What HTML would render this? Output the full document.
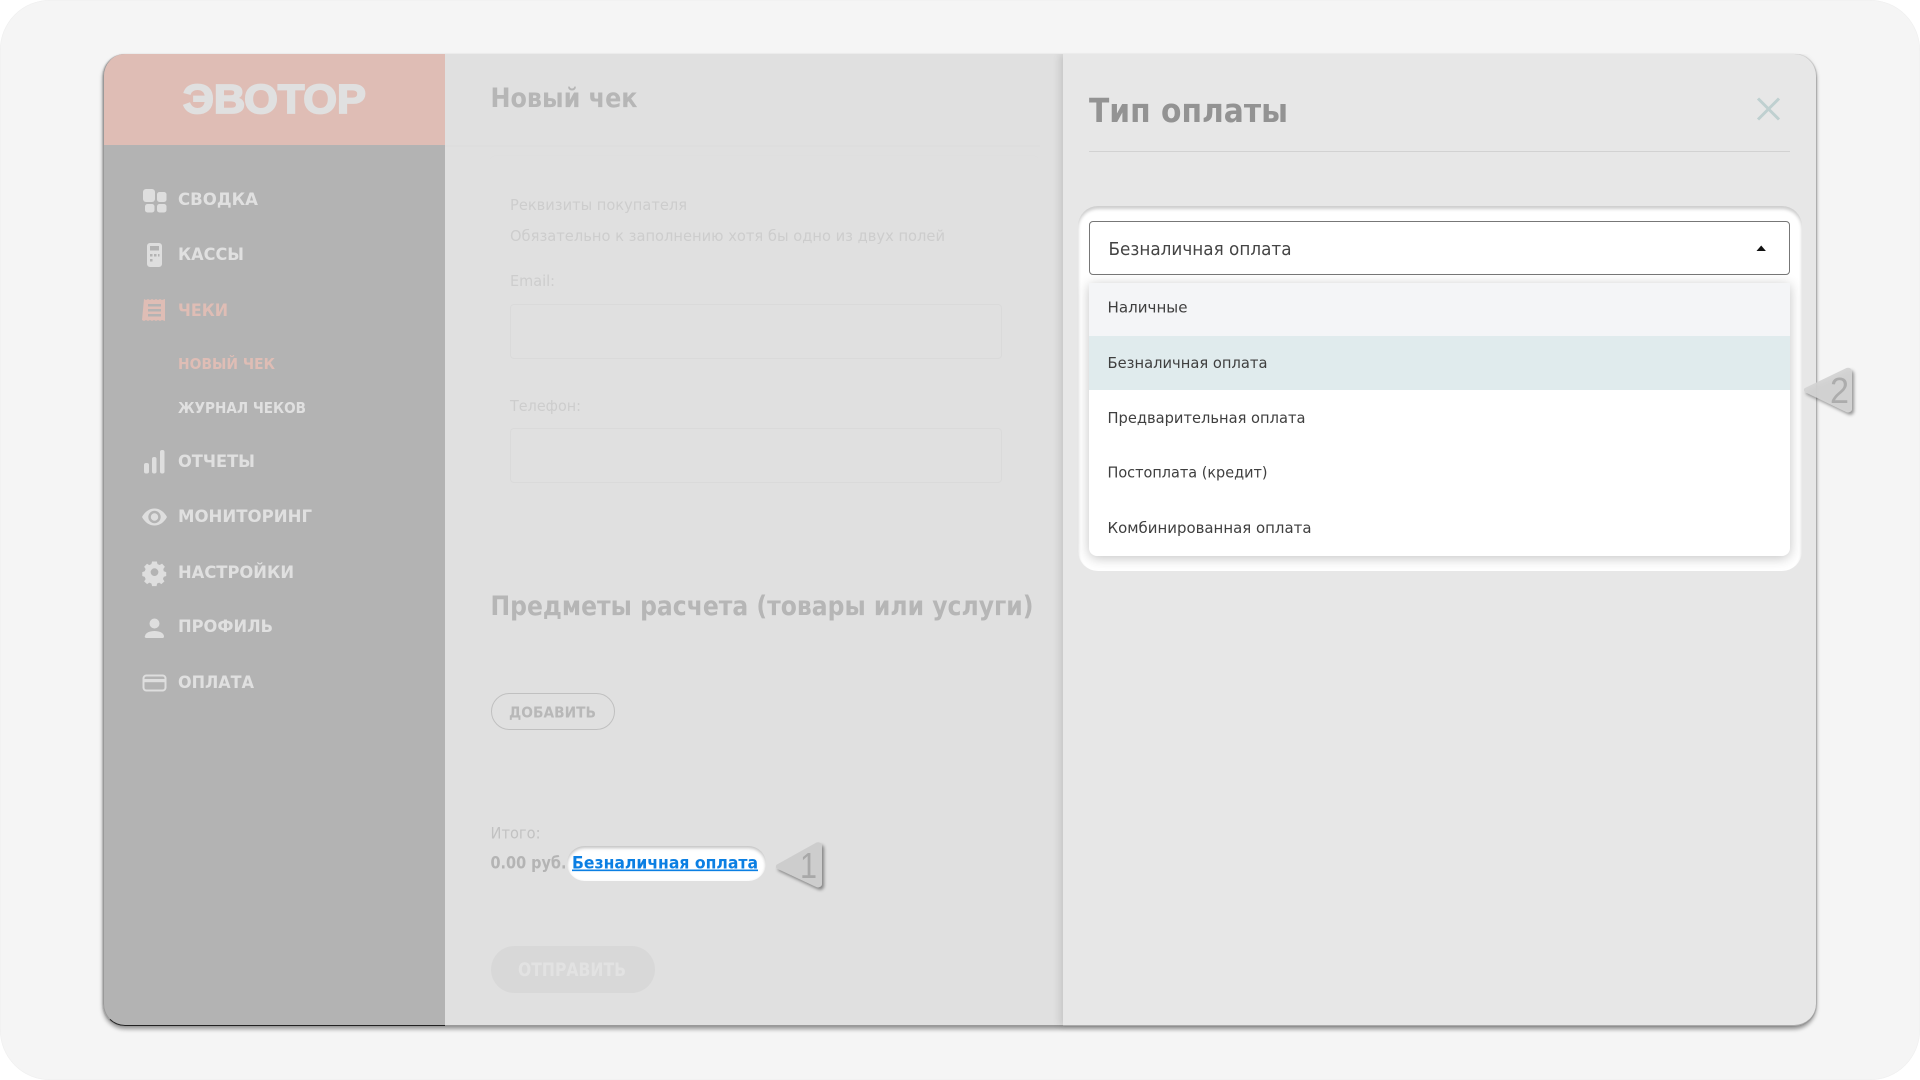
<!DOCTYPE html>
<html lang="ru"><head><meta charset="utf-8"><title>Тип оплаты</title>
<style>
html,body{margin:0;padding:0;width:1920px;height:1080px;overflow:hidden;background:#fff}
div{position:absolute;box-sizing:border-box}
#page{left:0;top:0;width:1920px;height:1080px;background:#f5f5f5;border-radius:50px;box-shadow:inset 0 0 1px rgba(0,0,0,.1)}
#app{left:103px;top:54px;width:1713px;height:972px;border-radius:22px;box-shadow:0 3px 4px rgba(0,0,0,.4),-1px 0 1px rgba(0,0,0,.12);background:#e0e0e0}
#side{left:103px;top:54px;width:342px;height:972px;background:#b3b3b3;border-radius:22px 0 0 22px;overflow:hidden;border-bottom:1px solid #222;border-left:1px solid #999}
#head{left:-1px;top:0;width:342px;height:91px;background:#dfbdb5}
#main{left:445px;top:54px;width:618px;height:972px;background:#e0e0e0;border-bottom:1px solid #999}
#hline{left:445px;top:145px;width:595px;height:2px;background:#dedede}
#card{left:490px;top:155px;width:549px;height:360px;background:#e0e0e0;border-top:1px solid #dfdfdf;border-radius:6px}
.inp{left:510px;width:492px;height:55px;border:1px solid #dadada;border-radius:4px;background:#e0e0e0}
#add{left:491px;top:693px;width:124px;height:37px;border:1px solid #c0c0c0;border-radius:19px}
#pill{left:567px;top:846px;width:199px;height:35px;border-radius:18px;background:#fff;box-shadow:inset 0 2px 3px rgba(0,0,0,.25)}
#send{left:491px;top:946px;width:164px;height:47px;border-radius:24px;background:#d8d8d8}
#panel{left:1063px;top:54px;width:753px;height:972px;background:#e7e7e7;border-radius:0 22px 22px 0;box-shadow:-3px 0 8px rgba(0,0,0,.12),1px 0 1px rgba(0,0,0,.15);border-bottom:1px solid #aaa;clip-path:inset(0 -12px -8px -12px)}
#pline{left:1089px;top:151px;width:701px;height:1px;background:#d2d2d2}
#hl{left:1078px;top:206px;width:724px;height:365px;border-radius:20px;background:#fff;box-shadow:inset 0 3px 3px rgba(0,0,0,.2)}
#sel{left:1089px;top:221px;width:701px;height:54px;border:1px solid #777;border-radius:4px;background:#fff}
#drop{left:1089px;top:283px;width:701px;height:273px;background:#fff;border-radius:0 0 8px 8px;box-shadow:0 2px 12px rgba(0,0,0,.24);overflow:hidden}
#i1{left:0;top:0;width:701px;height:53px;background:#f4f5f7}
#i2{left:0;top:53px;width:701px;height:54px;background:#e0ebed}
svg{position:absolute;left:0;top:0}
text{font-family:"Liberation Sans","DejaVu Sans",sans-serif}
.n{font-family:"DejaVu Sans","Liberation Sans",sans-serif;font-size:16.500px;font-weight:700;fill:#e0e0e0}
.a{fill:#dfbdb5}
.b{font-family:"DejaVu Sans","Liberation Sans",sans-serif;font-weight:700}
.r{font-family:"DejaVu Sans","Liberation Sans",sans-serif}
.f{font-size:15.500px;fill:#cdcdcd}
.d{font-size:15.500px;fill:#3f3f3f}
</style></head><body>
<div id="page"></div>
<div id="app"></div>
<div id="side"><div id="head"></div></div>
<div id="main"></div>
<div id="hline"></div>
<div id="card"></div>
<div class="inp" style="top:304px"></div>
<div class="inp" style="top:428px"></div>
<div id="add"></div>
<div id="pill"></div>
<div id="send"></div>
<div id="panel"></div>
<div id="pline"></div>
<div id="hl"></div>
<div id="sel"></div>
<div id="drop"><div id="i1"></div><div id="i2"></div></div>

<svg width="1920" height="1080" viewBox="0 0 1920 1080">
<defs><filter id="sh" x="-30%" y="-30%" width="170%" height="170%"><feDropShadow dx="2" dy="2.5" stdDeviation="1.6" flood-color="#000" flood-opacity=".42"/></filter></defs>

<!-- logo -->
<text x="183" y="113" font-size="41" font-weight="700" fill="#e0e0e0" stroke="#e0e0e0" stroke-width="1.800" textLength="183" lengthAdjust="spacingAndGlyphs">ЭВОТОР</text>

<!-- sidebar icons -->
<g fill="#dedede">
<rect x="143" y="189" width="12" height="13" rx="3"/><rect x="157" y="192" width="9.500" height="10" rx="2.500"/><rect x="145" y="204" width="9.500" height="8.500" rx="2.500"/><rect x="157" y="204" width="9.500" height="8.500" rx="2.500"/>
<path fill-rule="evenodd" d="M150 243h9a3 3 0 0 1 3 3v18a3 3 0 0 1-3 3h-9a3 3 0 0 1-3-3v-18a3 3 0 0 1 3-3zM150 246v4.500h9V246zM150 254v2.500h2.500V254zM154 254v2.500h2.500V254zM158 254v2.500h1.500V254zM150 259v2.500h2.500V259z"/>
<rect x="144" y="463" width="5" height="10.500" rx="2"/><rect x="152" y="457" width="4.500" height="16.500" rx="2"/><rect x="160" y="450" width="4.500" height="23.500" rx="2"/>
<path fill-rule="evenodd" d="M142 517c3-5.500 7.500-8.500 12.500-8.500s9.500 3 12.500 8.500c-3 5.500-7.500 8.500-12.500 8.500S145 522.500 142 517zM154.500 510.800a6.200 6.200 0 1 0 0 12.400a6.200 6.200 0 0 0 0-12.400zM154.500 513.300a3.700 3.700 0 1 1 0 7.400a3.700 3.700 0 0 1 0-7.400z"/>
<g transform="translate(154.500 572) scale(.88) translate(-154.500 -572)"><path fill-rule="evenodd" d="M151.800 561h5.400l.7 3 2.500 1.100 2.700-1.600 3.200 3.600-1.800 2.500.5 2.500 2.800 1v4.500l-2.800 1-.9 2.400 1.700 2.600-3.500 3.200-2.500-1.700-2.300 1-.7 3h-5l-.8-3-2.400-1-2.500 1.700-3.400-3.200 1.700-2.500-1-2.500-2.800-1v-4.500l2.800-1 1-2.500-1.700-2.500 3.300-3.500 2.500 1.600 2.400-1.100zM154.500 568.800a4.400 4.400 0 1 0 0 8.800a4.400 4.400 0 0 0 0-8.800z" transform="translate(0 -1)"/></g>
<circle cx="154.500" cy="623.500" r="5"/><path d="M145 636.500c0-3.500 4.500-5.500 9.500-5.500s9.500 2 9.500 5.500c0 .7-.5 1.500-1.200 1.500h-16.600c-.7 0-1.700-.8-1.700-1.500z"/>
</g>
<path fill="#dfbdb5" fill-rule="evenodd" d="M144 299l2 1 2-1 2 1 2-1 2 1 2-1 2 1 2-1 2 1 3-1v22l-3-1-2 1-2-1-2 1-2-1-2 1-2-1-2 1-2-1-2 1-2-1zM148 304v2.500h13V304zM148 309v2.500h13V309zM148 314v2.500h13V314z"/>
<rect x="143.500" y="675.500" width="22" height="15" rx="3" fill="none" stroke="#dedede" stroke-width="2"/><rect x="143.500" y="679" width="22" height="3.200" fill="#dedede"/>

<!-- sidebar text -->
<text class="n" x="178" y="205" textLength="80" lengthAdjust="spacingAndGlyphs">СВОДКА</text>
<text class="n" x="178" y="260" textLength="66" lengthAdjust="spacingAndGlyphs">КАССЫ</text>
<text class="n a" x="178" y="316" textLength="50" lengthAdjust="spacingAndGlyphs">ЧЕКИ</text>
<text class="n a" x="178" y="369" style="font-size:15.500px" textLength="97" lengthAdjust="spacingAndGlyphs">НОВЫЙ ЧЕК</text>
<text class="n" x="178" y="413" style="font-size:15.500px" textLength="128" lengthAdjust="spacingAndGlyphs">ЖУРНАЛ ЧЕКОВ</text>
<text class="n" x="178" y="467" textLength="77" lengthAdjust="spacingAndGlyphs">ОТЧЕТЫ</text>
<text class="n" x="178" y="522" textLength="134" lengthAdjust="spacingAndGlyphs">МОНИТОРИНГ</text>
<text class="n" x="178" y="578" textLength="116" lengthAdjust="spacingAndGlyphs">НАСТРОЙКИ</text>
<text class="n" x="178" y="632" textLength="95" lengthAdjust="spacingAndGlyphs">ПРОФИЛЬ</text>
<text class="n" x="178" y="688" textLength="76" lengthAdjust="spacingAndGlyphs">ОПЛАТА</text>

<!-- main text -->
<text class="b" x="490.500" y="107" font-size="26.500" fill="#b6b6b6" textLength="147" lengthAdjust="spacingAndGlyphs">Новый чек</text>
<text class="r f" x="510" y="210" textLength="177" lengthAdjust="spacingAndGlyphs">Реквизиты покупателя</text>
<text class="r f" x="510" y="241" textLength="435" lengthAdjust="spacingAndGlyphs">Обязательно к заполнению хотя бы одно из двух полей</text>
<text class="r f" x="510" y="286" textLength="45" lengthAdjust="spacingAndGlyphs">Email:</text>
<text class="r f" x="510" y="411" textLength="71" lengthAdjust="spacingAndGlyphs">Телефон:</text>
<text class="b" x="490.500" y="615" font-size="26.500" fill="#b6b6b6" textLength="543" lengthAdjust="spacingAndGlyphs">Предметы расчета (товары или услуги)</text>
<text class="b" x="509" y="717.500" font-size="15" fill="#b8b8b8" textLength="87" lengthAdjust="spacingAndGlyphs">ДОБАВИТЬ</text>
<text class="r" x="490.500" y="838.500" font-size="16" fill="#c2c2c2" textLength="50" lengthAdjust="spacingAndGlyphs">Итого:</text>
<text class="b" x="490.500" y="868.500" font-size="16.500" fill="#b4b4b4" textLength="76" lengthAdjust="spacingAndGlyphs">0.00 руб.</text>
<text class="b" x="572" y="868.500" font-size="16.500" fill="#0b7fe3" text-decoration="underline" textLength="186" lengthAdjust="spacingAndGlyphs">Безналичная оплата</text>
<text class="b" x="518" y="976" font-size="18.500" fill="#e2e2e2" textLength="108" lengthAdjust="spacingAndGlyphs">ОТПРАВИТЬ</text>

<!-- callout 1 -->
<path d="M777 864.500c-1.500 1-1.500 3 0 4l39.500 18.500c2.500 1 5.500-.5 5.500-3.500V846c0-3-3-4.500-5.500-3.500z" fill="#cdcdcd" filter="url(#sh)"/>
<text x="800" y="878" font-size="36" fill="#a8a8a8" textLength="17" lengthAdjust="spacingAndGlyphs">1</text>

<!-- panel text -->
<text class="b" x="1089" y="122" font-size="32.500" fill="#939393" textLength="199" lengthAdjust="spacingAndGlyphs">Тип оплаты</text>
<path d="M1758 98.500l21 21M1779 98.500l-21 21" stroke="#bfd0d0" stroke-width="3" fill="none"/>
<text class="r" x="1108.500" y="255" font-size="17.500" fill="#444" textLength="183" lengthAdjust="spacingAndGlyphs">Безналичная оплата</text>
<path d="M1756.500 251l4.700-5.500 4.700 5.500z" fill="#111"/>
<text class="r d" x="1107.500" y="312.500" textLength="80" lengthAdjust="spacingAndGlyphs">Наличные</text>
<text class="r d" x="1107.500" y="368" textLength="160" lengthAdjust="spacingAndGlyphs">Безналичная оплата</text>
<text class="r d" x="1107.500" y="423" textLength="198" lengthAdjust="spacingAndGlyphs">Предварительная оплата</text>
<text class="r d" x="1107.500" y="477.500" textLength="160" lengthAdjust="spacingAndGlyphs">Постоплата (кредит)</text>
<text class="r d" x="1107.500" y="533" textLength="204" lengthAdjust="spacingAndGlyphs">Комбинированная оплата</text>

<!-- callout 2 -->
<path d="M1805 388c-1.500 1-1.500 3 0 4l41.500 20c2.500 1 5.500-.5 5.500-3.500v-37c0-3-3-4.500-5.500-3.500z" fill="#d2d2d2" fill-opacity=".92" filter="url(#sh)"/>
<text x="1830" y="403" font-size="36" fill="#acacac" textLength="19" lengthAdjust="spacingAndGlyphs">2</text>
</svg>
</body></html>
